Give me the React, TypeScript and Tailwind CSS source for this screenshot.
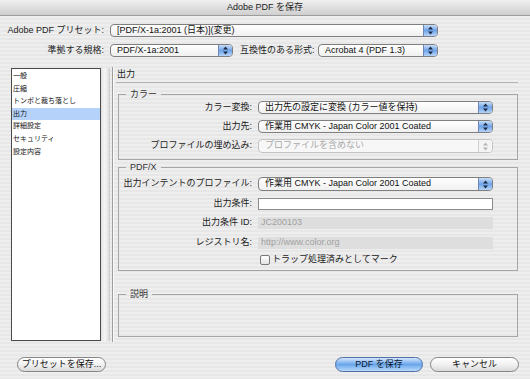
import React from "react";

const font = "font-['Liberation_Sans','Noto_Sans_CJK_JP',sans-serif]";

function Arrows({ disabled }: { disabled?: boolean }) {
  return (
    <svg width="5" height="9" viewBox="0 0 5 9" className={disabled ? "text-[#b5b5b5]" : "text-[#1d2a44]"}>
      <path d="M0 3.6 L2.5 0.6 L5 3.6 Z" fill="currentColor" />
      <path d="M0 5.4 L2.5 8.4 L5 5.4 Z" fill="currentColor" />
    </svg>
  );
}

function Select({
  value,
  className,
  disabled,
}: {
  value: string;
  className: string;
  disabled?: boolean;
}) {
  return (
    <div
      className={`${className} flex items-stretch rounded-[4px] border overflow-hidden ${
        disabled ? "border-[#c4c4c4] bg-[#f7f7f7]" : "border-[#7f7f7f] bg-gradient-to-b from-white to-[#f0f0f0]"
      }`}
    >
      <div
        className={`flex-1 flex items-center pl-[6px] whitespace-nowrap overflow-hidden ${
          disabled ? "text-[#a8a8a8]" : "text-[#111]"
        }`}
      >
        {value}
      </div>
      <div
        className={`w-[14px] flex items-center justify-center border-l ${
          disabled
            ? "border-[#d0d0d0] bg-[#f4f4f4]"
            : "border-[#6d86b3] bg-gradient-to-b from-[#c9def8] via-[#6ea3e8] to-[#b6d4f7]"
        }`}
      >
        <Arrows disabled={disabled} />
      </div>
    </div>
  );
}

function Field({ value, disabled }: { value?: string; disabled?: boolean }) {
  return (
    <div
      className={`ml-[6px] w-[235px] h-full flex items-center pl-[3px] ${
        disabled ? "bg-[#dedede] text-[#a0a0a0]" : "bg-white border border-[#8c8c8c]"
      }`}
    >
      {value}
    </div>
  );
}

function Row({ label, children, className }: { label: string; children: React.ReactNode; className: string }) {
  return (
    <div className={`flex items-center ${className}`}>
      <div className="w-[133px] text-right text-[#222] whitespace-nowrap">{label}</div>
      {children}
    </div>
  );
}

const sections = ["一般", "圧縮", "トンボと裁ち落とし", "出力", "詳細設定", "セキュリティ", "設定内容"];

function Button({ label, primary, className }: { label: string; primary?: boolean; className: string }) {
  return (
    <div
      className={`${className} h-[15px] rounded-full border flex items-center justify-center text-[9px] ${
        primary
          ? "border-[#4f6fa6] bg-gradient-to-b from-[#d4e6fc] via-[#6aa6ec] to-[#b9dafa] text-[#0b1a33]"
          : "border-[#858585] bg-gradient-to-b from-white via-[#f1f1f1] to-[#dadada] text-[#111]"
      }`}
    >
      {label}
    </div>
  );
}

export default function App() {
  return (
    <div className={`w-[530px] h-[379px] flex flex-col overflow-hidden text-[9px] ${font}`}>
      <div className="h-[16px] shrink-0 flex items-center justify-center border-b border-[#9c9c9c] bg-gradient-to-b from-[#f0f0f0] to-[#cfcfcf] text-[#222]">
        Adobe PDF を保存
      </div>

      <div className="flex-1 flex flex-col pt-[8px] bg-[repeating-linear-gradient(180deg,#eeeeee_0px,#eeeeee_2px,#e7e7e7_2px,#e7e7e7_4px)]">
        <div className="flex items-center h-[13px]">
          <div className="w-[104px] text-right text-[#222]">Adobe PDF プリセット:</div>
          <Select className="ml-[6px] w-[328px] h-[13px]" value="[PDF/X-1a:2001 (日本)](変更)" />
        </div>
        <div className="flex items-center h-[13px] mt-[7px]">
          <div className="w-[104px] text-right text-[#222]">準拠する規格:</div>
          <Select className="ml-[6px] w-[123px] h-[13px]" value="PDF/X-1a:2001" />
          <div className="ml-[7px] w-[73px] text-right text-[#222] whitespace-nowrap">互換性のある形式:</div>
          <Select className="ml-[5px] w-[120px] h-[13px]" value="Acrobat 4 (PDF 1.3)" />
        </div>

        <div className="flex mt-[10px] pl-[11px] h-[275px]">
          <div className="mt-[1px] w-[90px] h-[273px] border border-[#4a4a4a] bg-white pt-[1px] text-[7px] text-[#111]">
            {sections.map((s) => (
              <div key={s} className={`h-[12.6px] flex items-center pl-[1px] ${s === "出力" ? "bg-[#b5d2fb]" : ""}`}>
                {s}
              </div>
            ))}
          </div>
          <div className="mt-[1px] w-[9px] h-[273px] bg-gradient-to-r from-[#e2e2e2] via-[#f6f6f6] to-[#dcdcdc] border-r border-[#cfcfcf]" />
          <div className="ml-[2px] w-[2px] h-[275px] border-l border-[#9d9d9d] bg-[#fafafa]" />

          <div className="ml-[2px] w-[402px] flex flex-col">
            <div className="h-[16px] flex items-center pl-[1px] border-b border-[#b3b3b3] text-[#222]">出力</div>

            <fieldset className="ml-[2px] w-[400px] mt-[5px] border border-[#a6a6a6] pt-[1px] pb-[6px] flex flex-col">
              <legend className="ml-[7px] px-[4px] leading-[12px] text-[#333]">カラー</legend>
              <Row label="カラー変換:" className="h-[13px]">
                <Select className="ml-[6px] w-[235px] h-[13px]" value="出力先の設定に変換 (カラー値を保持)" />
              </Row>
              <Row label="出力先:" className="h-[13px] mt-[6px]">
                <Select className="ml-[6px] w-[235px] h-[13px]" value="作業用 CMYK - Japan Color 2001 Coated" />
              </Row>
              <Row label="プロファイルの埋め込み:" className="h-[14px] mt-[6px]">
                <Select disabled className="ml-[6px] w-[235px] h-[14px]" value="プロファイルを含めない" />
              </Row>
            </fieldset>

            <fieldset className="ml-[2px] w-[400px] mt-[1px] border border-[#a6a6a6] pt-[4px] pb-[4px] flex flex-col">
              <legend className="ml-[7px] px-[4px] leading-[12px] text-[#333]">PDF/X</legend>
              <Row label="出力インテントのプロファイル:" className="h-[14px]">
                <Select className="ml-[6px] w-[235px] h-[14px]" value="作業用 CMYK - Japan Color 2001 Coated" />
              </Row>
              <Row label="出力条件:" className="h-[12px] mt-[7px]">
                <Field />
              </Row>
              <Row label="出力条件 ID:" className="h-[12px] mt-[7px]">
                <Field disabled value="JC200103" />
              </Row>
              <Row label="レジストリ名:" className="h-[12px] mt-[8px]">
                <Field disabled value="http://www.color.org" />
              </Row>
              <div className="flex items-center h-[12px] mt-[5px] pl-[141px] text-[#222]">
                <div className="w-[10px] h-[10px] rounded-[2px] border border-[#7a7a7a] bg-gradient-to-b from-white to-[#e4e4e4]" />
                <span className="ml-[2px]">トラップ処理済みとしてマーク</span>
              </div>
            </fieldset>

            <fieldset className="ml-[2px] w-[400px] mt-[17px] border border-[#a6a6a6]">
              <legend className="ml-[7px] px-[4px] leading-[12px] text-[#333]">説明</legend>
              <div className="h-[36px]" />
            </fieldset>
          </div>
        </div>

        <div className="flex items-center mt-[15px] pl-[17px] pr-[11px]">
          <Button className="w-[89px]" label="プリセットを保存..." />
          <div className="flex-1" />
          <Button primary className="w-[88px]" label="PDF を保存" />
          <Button className="ml-[7px] w-[89px]" label="キャンセル" />
        </div>
      </div>
    </div>
  );
}
